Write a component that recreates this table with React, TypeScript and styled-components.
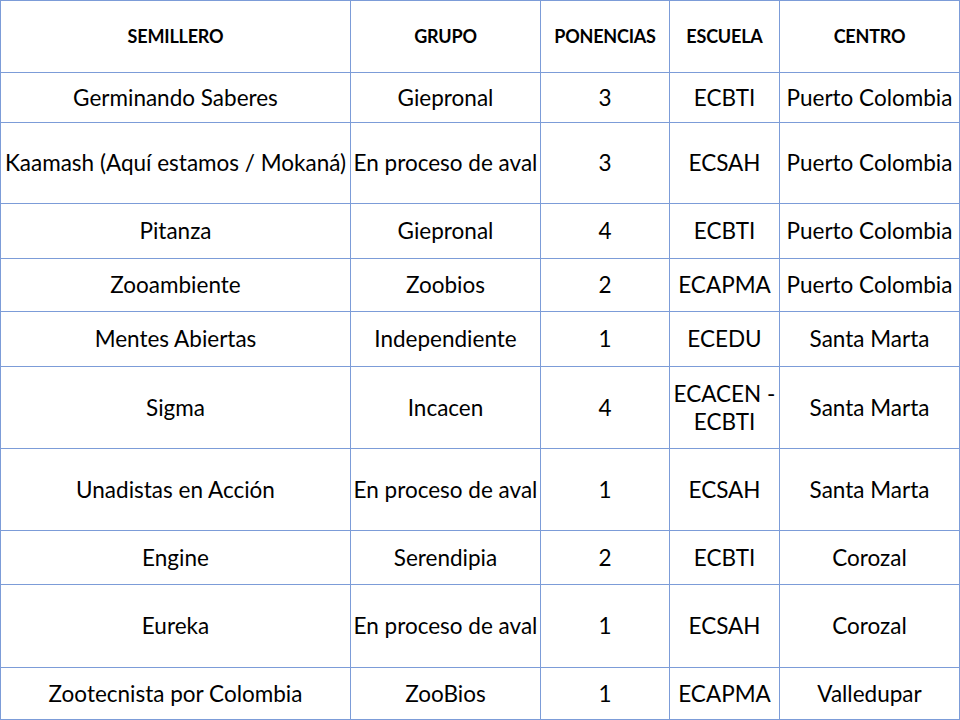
import React from "react";
import styled, { createGlobalStyle } from "styled-components";

const Global = createGlobalStyle`
  html, body { margin: 0; padding: 0; background: #ffffff; }
  body { font-family: "Lato", "Liberation Sans", sans-serif; }
`;

const LINE = "#7c9cd8";

const Grid = styled.div`
  display: grid;
  grid-template-columns: 350px 190px 129px 110px 180px;
  width: 959px;
  border-top: 1px solid ${LINE};
  border-left: 1px solid ${LINE};
  background: #fff;
`;

const Cell = styled.div<{ $h: number; $head?: boolean }>`
  height: ${(p) => p.$h - 1}px;
  border-right: 1px solid ${LINE};
  border-bottom: 1px solid ${LINE};
  display: flex;
  align-items: center;
  justify-content: center;
  text-align: center;
  color: #000;
  font-family: "Lato", "Liberation Sans", sans-serif;
  font-size: ${(p) => (p.$head ? "18px" : "22.5px")};
  font-weight: ${(p) => (p.$head ? 700 : 400)};
  line-height: 1.22;
  white-space: nowrap;
  letter-spacing: ${(p) => (p.$head ? "-0.2px" : "0")};
  box-sizing: content-box;
`;

type Row = [string, string, string, string, string];

const head: Row = ["SEMILLERO", "GRUPO", "PONENCIAS", "ESCUELA", "CENTRO"];

const rows: { h: number; d: Row }[] = [
  { h: 50, d: ["Germinando Saberes", "Giepronal", "3", "ECBTI", "Puerto Colombia"] },
  { h: 81, d: ["Kaamash (Aquí estamos / Mokaná)", "En proceso de aval", "3", "ECSAH", "Puerto Colombia"] },
  { h: 55, d: ["Pitanza", "Giepronal", "4", "ECBTI", "Puerto Colombia"] },
  { h: 53, d: ["Zooambiente", "Zoobios", "2", "ECAPMA", "Puerto Colombia"] },
  { h: 55, d: ["Mentes Abiertas", "Independiente", "1", "ECEDU", "Santa Marta"] },
  { h: 82, d: ["Sigma", "Incacen", "4", "ECACEN -\nECBTI", "Santa Marta"] },
  { h: 82, d: ["Unadistas en Acción", "En proceso de aval", "1", "ECSAH", "Santa Marta"] },
  { h: 54, d: ["Engine", "Serendipia", "2", "ECBTI", "Corozal"] },
  { h: 83, d: ["Eureka", "En proceso de aval", "1", "ECSAH", "Corozal"] },
  { h: 52, d: ["Zootecnista por Colombia", "ZooBios", "1", "ECAPMA", "Valledupar"] },
];

function renderText(t: string) {
  const parts = t.split("\n");
  return parts.map((p, k) => (
    <React.Fragment key={k}>
      {k > 0 && <br />}
      {p}
    </React.Fragment>
  ));
}

export default function App() {
  return (
    <>
      <Global />
      <Grid>
        {head.map((t) => (
          <Cell key={t} $h={72} $head>
            {t}
          </Cell>
        ))}
        {rows.map((r, i) =>
          r.d.map((t, j) => (
            <Cell key={`${i}-${j}`} $h={r.h}>
              <span>{renderText(t)}</span>
            </Cell>
          ))
        )}
      </Grid>
    </>
  );
}
